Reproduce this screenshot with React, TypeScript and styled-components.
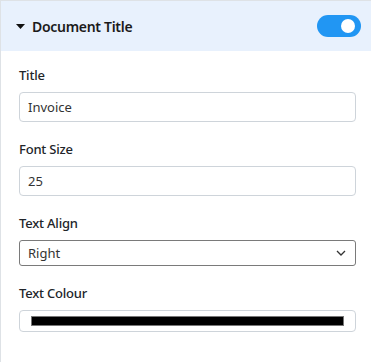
import { useState } from "react";
import styled, { createGlobalStyle } from "styled-components";

const GlobalStyle = createGlobalStyle`
  html, body {
    margin: 0;
    padding: 0;
    background: #fff;
  }
  body {
    font-family: "Noto Sans", "Open Sans", sans-serif;
    color: #212529;
  }
`;

const Panel = styled.section`
  width: 100%;
  min-height: 362px;
  box-sizing: border-box;
  border-left: 1px solid #dee2e6;
  border-top: 1px solid #dee2e6;
`;

const Header = styled.header`
  height: 50px;
  display: flex;
  align-items: center;
  justify-content: space-between;
  padding: 0 10px 0 15px;
  background-color: #e8f1fd;
`;

const HeaderTitle = styled.div`
  display: flex;
  align-items: center;
  gap: 7px;
  font-size: 14px;
  font-weight: 600;
  letter-spacing: -0.3px;
  color: #1b1b1b;
`;

const Switch = styled.button<{ on: boolean }>`
  position: relative;
  width: 44px;
  height: 22px;
  border: none;
  padding: 0;
  border-radius: 11px;
  background-color: ${(props) => (props.on ? "#2196f3" : "#c7c7c7")};
  cursor: pointer;

  &::after {
    content: "";
    position: absolute;
    top: 4px;
    left: ${(props) => (props.on ? "24px" : "4px")};
    width: 14px;
    height: 14px;
    border-radius: 50%;
    background: #fff;
  }
`;

const Body = styled.div`
  padding: 15px 15px 20px 18px;
  display: grid;
  gap: 18px;
`;

const Field = styled.div`
  display: grid;
  gap: 8px;
`;

const Label = styled.label`
  font-size: 13px;
  line-height: 18px;
  font-weight: 500;
  letter-spacing: -0.2px;
  color: #212529;
`;

const TextInput = styled.input`
  box-sizing: border-box;
  width: 100%;
  height: 30px;
  padding: 0 8px;
  border: 1px solid #ced4da;
  border-radius: 4px;
  font-family: inherit;
  font-size: 13px;
  color: #333;
  background: #fff;
  outline: none;
`;

const SelectWrap = styled.div`
  position: relative;
`;

const Select = styled.select`
  box-sizing: border-box;
  width: 100%;
  height: 26px;
  padding: 0 28px 0 8px;
  border: 1px solid #7a7a7a;
  border-radius: 3px;
  font-family: inherit;
  font-size: 13px;
  color: #333;
  background: #fff;
  appearance: none;
  outline: none;
`;

const Chevron = styled.svg`
  position: absolute;
  right: 10px;
  top: 50%;
  transform: translateY(-50%);
  pointer-events: none;
`;

const ColorInput = styled.input`
  box-sizing: border-box;
  width: 100%;
  height: 22px;
  padding: 0;
  border: 1px solid #ced4da;
  border-radius: 4px;
  background: #fff;
  cursor: pointer;

  &::-webkit-color-swatch-wrapper {
    padding: 5px 11px;
  }
  &::-webkit-color-swatch {
    border: 1px solid #777;
    border-radius: 0;
  }
`;

export default function App() {
  const [enabled, setEnabled] = useState(true);
  const [title, setTitle] = useState("Invoice");
  const [size, setSize] = useState("25");
  const [align, setAlign] = useState("right");
  const [colour, setColour] = useState("#000000");

  return (
    <>
      <GlobalStyle />
      <Panel>
        <Header>
          <HeaderTitle>
            <svg width="9" height="5" viewBox="0 0 9 5">
              <path d="M0 0h9L4.5 5z" fill="#111" />
            </svg>
            Document Title
          </HeaderTitle>
          <Switch on={enabled} onClick={() => setEnabled(!enabled)} aria-label="Toggle" />
        </Header>
        <Body>
          <Field>
            <Label htmlFor="title">Title</Label>
            <TextInput id="title" value={title} onChange={(e) => setTitle(e.target.value)} />
          </Field>
          <Field>
            <Label htmlFor="size">Font Size</Label>
            <TextInput id="size" value={size} onChange={(e) => setSize(e.target.value)} />
          </Field>
          <Field>
            <Label htmlFor="align">Text Align</Label>
            <SelectWrap>
              <Select id="align" value={align} onChange={(e) => setAlign(e.target.value)}>
                <option value="left">Left</option>
                <option value="center">Center</option>
                <option value="right">Right</option>
              </Select>
              <Chevron width="10" height="6" viewBox="0 0 10 6">
                <path d="M1 1l4 4 4-4" fill="none" stroke="#333" strokeWidth="1.3" />
              </Chevron>
            </SelectWrap>
          </Field>
          <Field>
            <Label htmlFor="colour">Text Colour</Label>
            <ColorInput
              id="colour"
              type="color"
              value={colour}
              onChange={(e) => setColour(e.target.value)}
            />
          </Field>
        </Body>
      </Panel>
    </>
  );
}
